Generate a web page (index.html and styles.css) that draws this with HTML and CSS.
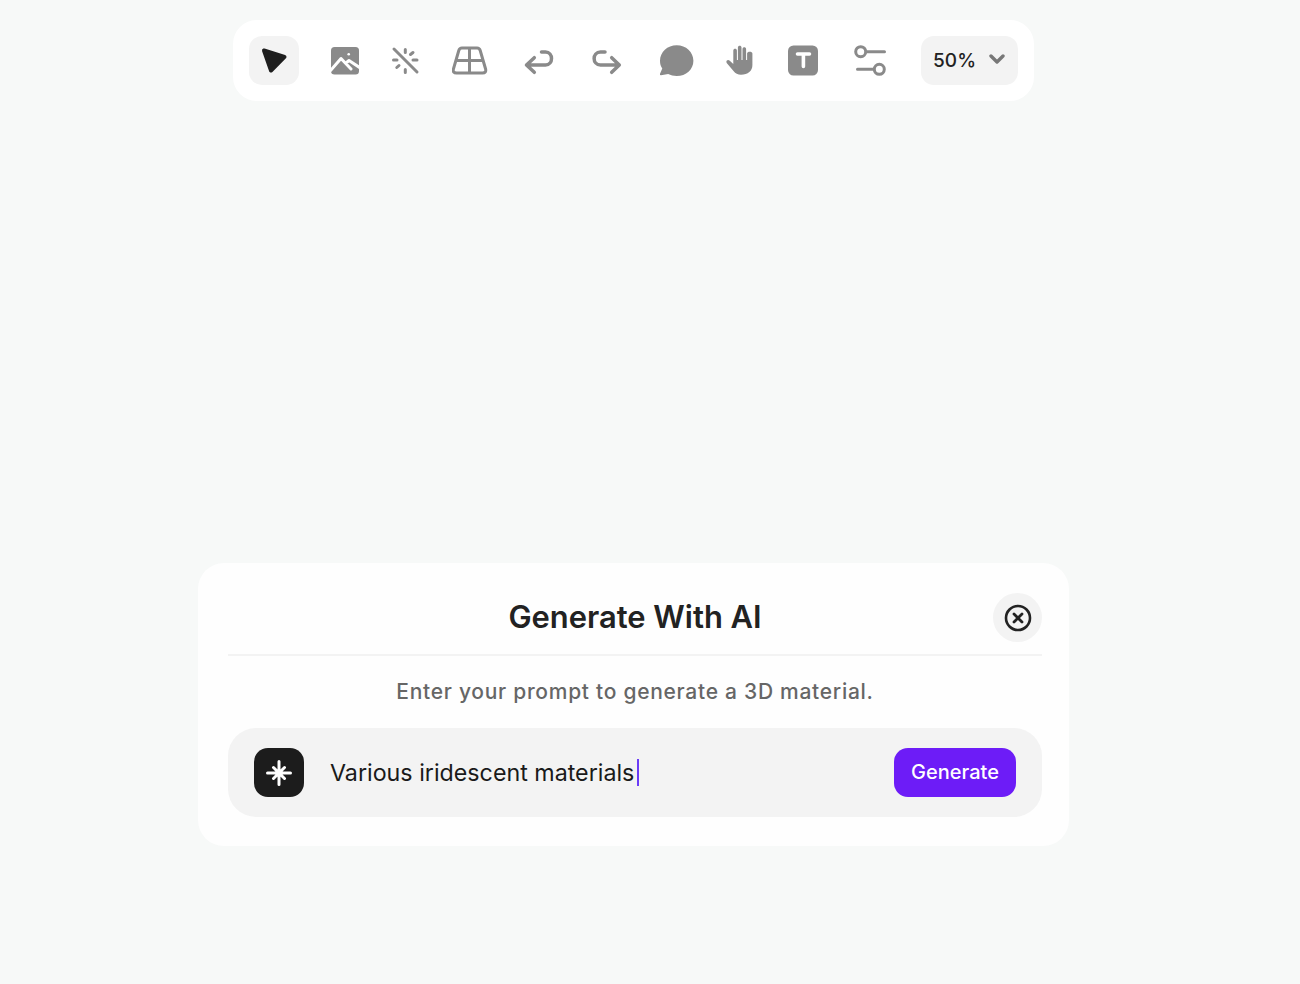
FILE: index.html
```html
<!DOCTYPE html>
<html lang="en">
<head>
<meta charset="utf-8">
<title>Generate With AI</title>
<link rel="stylesheet" href="styles.css">
</head>
<body>
<nav class="toolbar">
  <button class="tool tool-active">
    <svg class="ico" width="50" height="49" viewBox="249 36 50 49"><path class="fill-dark" d="M264 50.5 L284.5 56.8 L271 70.5 Z"/></svg>
  </button>
  <svg class="ico" width="28" height="49" viewBox="331 36 28 49">
    <rect class="fill" x="331" y="47" width="28" height="27.5" rx="3.5"/>
    <path class="cut" d="M330.5 70.5 L341 58.5 L351 69 M346 63 L349 60.5 L359.5 67.5"/>
    <circle class="dot" cx="348.7" cy="54.3" r="1.3"/>
  </svg>
  <svg class="ico" width="29" height="49" viewBox="391 36 29 49">
    <path class="line-3" d="M394 49 L417 72 M405.3 49.5 V52.5 M410.5 54.5 L413 52.5 M413 60 H417 M405.3 69.5 V72.5 M396.8 67.5 L399 65.5 M393.5 60 H397"/>
  </svg>
  <svg class="ico" width="36" height="49" viewBox="452 36 36 49">
    <path class="line-3" d="M462.5 48 H477 Q479.5 48 480.2 50.5 L485.6 69 Q486.5 73 482.5 73 H456.5 Q452.5 73 453.4 69 L458.8 50.5 Q459.5 48 462 48 Z M469.5 48 V73 M457 60.5 H483"/>
  </svg>
  <svg class="ico" width="38" height="49" viewBox="520 36 38 49">
    <path class="line-arrow" d="M534.3 57.7 L526.5 65 L534.3 72.3 M526.5 65 H545.5 C553.5 65 553.5 52 545.5 52 H541.5"/>
  </svg>
  <svg class="ico" width="32" height="49" viewBox="590 36 32 49">
    <path class="line-arrow" d="M611.7 57.7 L619.3 65 L611.7 72.3 M619.3 65 H600.5 C592 65 592 52 600.5 52 H605"/>
  </svg>
  <svg class="ico" width="40" height="49" viewBox="654 36 40 49">
    <path class="fill" d="M676.7 45.2 C686 45.2 693.4 52 693.4 60.7 C693.4 69.4 686 76 676.7 76 C673.6 76 670.6 75.3 668.2 74 L661 75.2 Q659.5 75.2 660 73.7 L662.3 68.6 C660.7 66.3 660 63.6 660 60.7 C660 52 667.4 45.2 676.7 45.2 Z"/>
  </svg>
  <svg class="ico" width="28" height="49" viewBox="726 36 28 49">
    <path class="fill" d="M733.3 64 V50.5 C733.3 48.3 736.9 48.3 736.9 50.5 V60 H737.9 V47.5 C737.9 45.2 741.5 45.2 741.5 47.5 V60 H742.5 V49 C742.5 46.8 746.1 46.8 746.1 49 V60 H747.1 V53.5 C747.1 51.3 752.4 51.3 752.4 53.5 V65 C752.4 71 748 74.7 741 74.7 C737.8 74.7 735.5 73.6 733.5 71 L726.9 63.2 C725.3 61 727.8 58.8 729.8 60.8 Z"/>
  </svg>
  <svg class="ico" width="34" height="49" viewBox="786 36 34 49">
    <rect class="fill" x="788" y="45.5" width="30" height="30" rx="5.5"/>
    <path class="cut-t" d="M797.5 54 H809.5 M803.4 54 V66.5"/>
  </svg>
  <svg class="ico" width="37" height="49" viewBox="852 36 37 49">
    <circle class="ring" cx="860.7" cy="51.7" r="5"/>
    <circle class="ring" cx="879.3" cy="69.3" r="5"/>
    <path class="line-3" d="M867 51.7 H884.5 M857.5 69.3 H873"/>
  </svg>
  <button class="zoom">
    <span>50%</span>
    <svg class="zoom-chev" width="16" height="10" viewBox="0 0 16 10"><path class="chev" d="M2 2 L8 8 L14 2"/></svg>
  </button>
</nav>

<section class="modal">
  <header class="modal-head">
    <span></span>
    <h1 class="modal-title">Generate With AI</h1>
    <button class="close" aria-label="Close">
      <svg width="28" height="28" viewBox="0 0 28 28"><circle class="close-ring" cx="14" cy="14" r="12"/><path class="close-x" d="M10 10 L18 18 M18 10 L10 18"/></svg>
    </button>
  </header>
  <p class="modal-sub">Enter your prompt to generate a 3D material.</p>
  <div class="prompt">
    <div class="prompt-logo">
      <svg width="26" height="26" viewBox="0 0 26 26"><path class="star" d="M13 1.5 V24.5 M1.5 13 H24.5 M7.5 7.5 L18.5 18.5 M18.5 7.5 L7.5 18.5"/></svg>
    </div>
    <div class="prompt-text">Various iridescent materials<span class="caret"></span></div>
    <button class="generate">Generate</button>
  </div>
</section>
</body>
</html>
```
FILE: styles.css
```css
* { box-sizing: border-box; }
html, body { height: 100%; }
body {
  margin: 0;
  padding: 20px 33px 0 0;
  background: #f7f9f8;
  font-family: Inter, "Liberation Sans", sans-serif;
  display: flex;
  flex-direction: column;
  align-items: center;
  overflow: hidden;
}
button { font-family: inherit; border: 0; padding: 0; cursor: pointer; }

.toolbar {
  width: 801px;
  height: 81px;
  padding: 16px;
  background: #fff;
  border-radius: 24px;
  display: flex;
  align-items: flex-start;
  gap: 32px;
}
.ico { display: block; flex: none; }
.tool {
  width: 50px;
  height: 49px;
  flex: none;
  border-radius: 13px;
  background: #f3f3f3;
}
.fill { fill: #8a8a8a; }
.fill-dark { fill: #1e1e1e; stroke: #1e1e1e; stroke-width: 4; stroke-linejoin: round; }
.line-3 { fill: none; stroke: #8a8a8a; stroke-width: 3; stroke-linecap: round; stroke-linejoin: round; }
.line-arrow { fill: none; stroke: #8a8a8a; stroke-width: 3.5; stroke-linecap: round; stroke-linejoin: round; }
.ring { fill: none; stroke: #8a8a8a; stroke-width: 3; }
.cut { fill: none; stroke: #fff; stroke-width: 3; stroke-linejoin: round; stroke-linecap: round; }
.cut-t { fill: none; stroke: #fff; stroke-width: 3.6; stroke-linecap: round; }
.dot { fill: #fff; }

.zoom {
  width: 97px;
  height: 49px;
  flex: none;
  padding: 0 13px 0 12px;
  border-radius: 13px;
  background: #f3f3f3;
  color: #222;
  font-size: 19px;
  font-weight: 500;
  letter-spacing: 0.1px;
  display: flex;
  align-items: center;
  justify-content: space-between;
}
.zoom-chev { margin-bottom: 3px; }
.chev { fill: none; stroke: #777; stroke-width: 3.4; stroke-linecap: round; stroke-linejoin: round; }

.modal {
  width: 871px;
  height: 283px;
  margin-top: 462px;
  padding: 30px 27px 30px 30px;
  background: #fefefe;
  border-radius: 26px;
}
.modal-head {
  height: 63px;
  padding-bottom: 13px;
  border-bottom: 2px solid #f3f3f3;
  display: grid;
  grid-template-columns: 1fr auto 1fr;
  align-items: center;
}
.modal-title {
  margin: 0 0 2px;
  font-size: 30.9px;
  font-weight: 600;
  line-height: 47px;
  color: #222;
}
.close {
  justify-self: end;
  width: 49px;
  height: 49px;
  border-radius: 50%;
  background: #f3f3f3;
  display: flex;
  align-items: center;
  justify-content: center;
}
.close-ring { fill: none; stroke: #222; stroke-width: 2.6; }
.close-x { fill: none; stroke: #222; stroke-width: 2.8; stroke-linecap: round; }

.modal-sub {
  margin: 0;
  height: 72px;
  line-height: 72px;
  text-align: center;
  font-size: 21px;
  font-weight: 500;
  letter-spacing: 0.72px;
  color: #666;
}
.prompt {
  height: 89px;
  padding: 0 26px;
  border-radius: 28px;
  background: #f3f3f3;
  display: flex;
  align-items: center;
  gap: 26px;
}
.prompt-logo {
  width: 50px;
  height: 49px;
  flex: none;
  border-radius: 14px;
  background: #1c1c1c;
  display: flex;
  align-items: center;
  justify-content: center;
}
.star { fill: none; stroke: #fff; stroke-width: 3; stroke-linecap: round; }
.prompt-text {
  flex: 1;
  font-size: 23.25px;
  color: #1a1a1a;
  display: flex;
  align-items: center;
}
.caret {
  width: 2px;
  height: 27px;
  margin-left: 3px;
  background: #6a3cf7;
}
.generate {
  width: 122px;
  height: 49px;
  flex: none;
  padding-bottom: 1px;
  border-radius: 14px;
  background: #6d1cf7;
  color: #fff;
  font-size: 20px;
  font-weight: 500;
}
```
